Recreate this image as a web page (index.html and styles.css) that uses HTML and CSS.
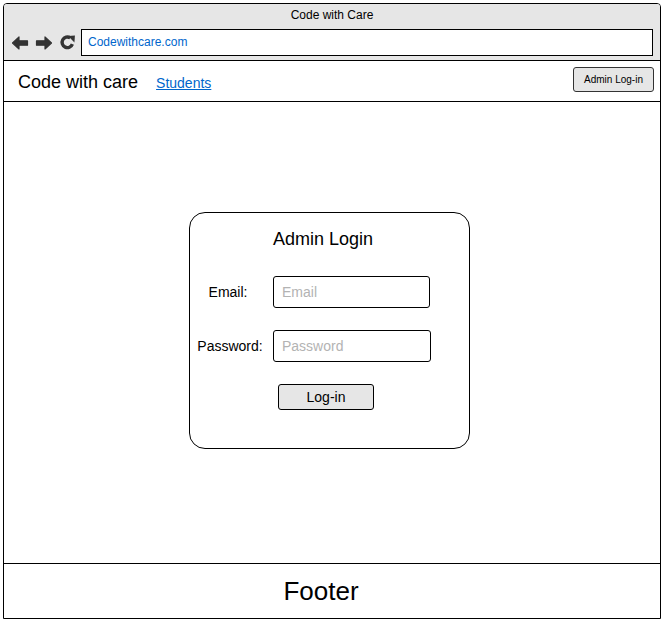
FILE: index.html
```html
<!DOCTYPE html>
<html>
<head>
<meta charset="utf-8">
<link rel="stylesheet" href="styles.css">
</head>
<body>
<div class="frame">
  <div class="chrome">
    <div class="title">Code with Care</div>
    <div class="addr-row">
      <div class="navs">
        <svg width="18" height="16" viewBox="0 0 18 16" class="ico"><path d="M1.5 8L8 2V5.8H16.5V10.2H8V14Z" fill="#333" stroke="#333" stroke-width="1.2" stroke-linejoin="round"/></svg>
        <svg width="18" height="16" viewBox="0 0 18 16" class="ico"><path d="M16.5 8L10 2V5.8H1.5V10.2H10V14Z" fill="#333" stroke="#333" stroke-width="1.2" stroke-linejoin="round"/></svg>
        <svg width="17" height="17" viewBox="0 0 16 16" class="ico"><path d="M12.6 9.6A5 5 0 1 1 10.6 3.6" fill="none" stroke="#333" stroke-width="3.2"/><path d="M8.6 1.8L15 1.5L14.5 8Z" fill="#333"/></svg>
      </div>
      <div class="addr">Codewithcare.com</div>
    </div>
  </div>
  <div class="header">
    <span class="brand">Code with care</span>
    <a class="link" href="#">Students</a>
    <span class="spacer"></span>
    <button class="admin-btn">Admin Log-in</button>
  </div>
  <div class="main">
    <div class="card">
      <div class="card-title">Admin Login</div>
      <div class="form">
        <label class="lbl">Email:</label>
        <input class="inp" placeholder="Email">
        <label class="lbl">Password:</label>
        <input class="inp inp2" placeholder="Password">
      </div>
      <button class="login-btn">Log-in</button>
    </div>
  </div>
  <div class="footer">Footer</div>
</div>
</body>
</html>
```
FILE: styles.css
```css
* { box-sizing: border-box; }
html, body { margin: 0; padding: 0; background: #fff; }
body { font-family: "Liberation Sans", Arial, sans-serif; color: #000; }
.frame {
  margin: 3px 0 0 3px;
  width: 658px;
  height: 616px;
  border: 1px solid #000;
  border-radius: 4px 4px 0 0;
  display: flex;
  flex-direction: column;
  overflow: hidden;
}
.chrome {
  background: #e6e6e6;
  border-bottom: 1px solid #000;
  height: 57px;
}
.title {
  height: 22px;
  line-height: 22px;
  text-align: center;
  font-size: 12px;
}
.addr-row {
  display: flex;
  align-items: center;
  margin-top: 3px;
  height: 27px;
}
.navs {
  display: flex;
  align-items: center;
  gap: 6px;
  padding-left: 7px;
  width: 77px;
}
.ico { display: block; }
.addr {
  width: 572px;
  height: 27px;
  background: #fff;
  border: 1px solid #000;
  font-size: 12px;
  color: #0066cc;
  line-height: 25px;
  padding-left: 6px;
}
.header {
  height: 41px;
  border-bottom: 1px solid #000;
  display: flex;
  align-items: center;
  padding: 0 6px 0 14px;
}
.brand { font-size: 18px; margin-top: 3px; }
.link {
  font-size: 14px;
  color: #0066cc;
  text-decoration: underline;
  margin-left: 18px;
  margin-top: 3px;
}
.spacer { flex: 1; }
.admin-btn {
  width: 81px;
  height: 25px;
  margin-top: -3px;
  background: #e6e6e6;
  border: 1px solid #333;
  border-radius: 3px;
  font-family: "Liberation Sans", Arial, sans-serif;
  font-size: 10px;
  color: #000;
  padding: 0;
}
.main {
  flex: 1;
  border-bottom: 1px solid #000;
  padding: 110px 0 0 185px;
}
.card {
  width: 281px;
  height: 237px;
  border: 1px solid #000;
  border-radius: 16px;
  padding-top: 15px;
}
.card-title {
  text-align: center;
  font-size: 18px;
  line-height: 22px;
  padding-right: 13px;
}
.form {
  margin-top: 26px;
  display: grid;
  grid-template-columns: 80px 157px;
  column-gap: 3px;
  row-gap: 22px;
  align-items: center;
}
.lbl {
  text-align: center;
  font-size: 14px;
}
.lbl:first-child { padding-right: 4px; }
.inp {
  width: 157px;
  height: 32px;
  border: 1px solid #000;
  border-radius: 3px;
  font-family: "Liberation Sans", Arial, sans-serif;
  font-size: 14px;
  padding: 0 0 0 8px;
  outline: none;
}
.inp2 { width: 158px; }
.inp::placeholder { color: #b3b3b3; }
.login-btn {
  display: block;
  margin: 22px 0 0 88px;
  width: 96px;
  height: 26px;
  background: #e6e6e6;
  border: 1px solid #000;
  border-radius: 3px;
  font-family: "Liberation Sans", Arial, sans-serif;
  font-size: 14px;
  color: #000;
  padding: 0;
}
.footer {
  height: 54px;
  text-align: center;
  font-size: 26px;
  line-height: 54px;
  padding-right: 22px;
}
```
